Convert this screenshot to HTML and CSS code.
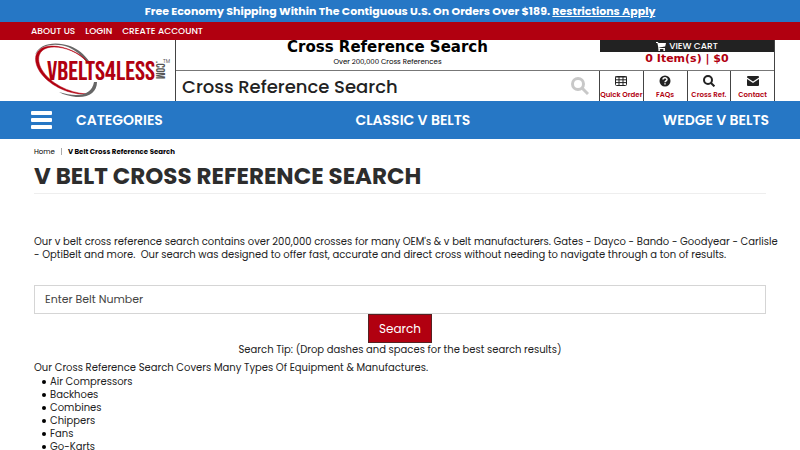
FILE: index.html
```
<!DOCTYPE html>
<html lang="en">
<head>
    <meta charset="UTF-8">
    <meta name="viewport" content="width=device-width, initial-scale=1.0">
    <title>V Belt Cross Reference Search</title>
    <link rel="stylesheet" href="styles.css">
</head>
<body>

    <div class="promo-bar">
        Free Economy Shipping Within The Contiguous U.S. On Orders Over $189. <a href="#">Restrictions Apply</a>
    </div>

    <nav class="account-bar" aria-label="Account">
        <a href="#">ABOUT US</a>
        <a href="#">LOGIN</a>
        <a href="#">CREATE ACCOUNT</a>
    </nav>

    <header class="site-header">
        <a class="logo" href="#" aria-label="VBelts4Less.com">
            <svg width="141" height="58" viewBox="0 0 141 58">
                <path d="M1 13C5 1 22-1 36 4C44 7 50 12 55 19L52 19C46 12 41 8 34 5C22 1 7 2 1 13Z" fill="#666"/>
                <path d="M52 19C45 11 32 5 20 5C5 5 1 16 8 28C16 41 34 51 53 52C34 53 15 43 6 30C-3 16 2 4 18 4C31 4 46 11 53 19Z" fill="#b10010" stroke="#b10010" stroke-width="0.5"/>
                <path d="M60 40L63 40C63 50 55 56 42 55C36 54 30 53 25 50C44 56 58 53 60 40Z" fill="#666"/>
                <text class="logo-name" x="13" y="38">VBELTS4LESS</text>
                <text class="logo-com" transform="translate(122 19) rotate(90)">.COM</text>
                <text class="logo-tm" x="129" y="21">TM</text>
            </svg>
        </a>

        <div class="header-main">
            <div class="header-title">
                <strong>Cross Reference Search</strong>
                <small>Over 200,000 Cross References</small>
            </div>
            <form class="header-search">
                <input type="text" placeholder="Cross Reference Search" aria-label="Cross Reference Search">
                <button type="submit" aria-label="Search">
                    <svg width="18" height="19" viewBox="0 0 18 19" fill="none" stroke="#c8c8c8" stroke-width="3">
                        <circle cx="7" cy="7" r="5.5"/>
                        <path d="M11 11L17 17"/>
                    </svg>
                </button>
            </form>
        </div>

        <div class="header-side">
            <div class="cart">
                <a class="cart-link" href="#">
                    <svg width="10" height="9" viewBox="0 0 10 9" fill="#fff">
                        <path d="M0 0H2L2.4 1H10L9.2 4.6L3.3 5.4V6H9V7H2.3V5.5L1.4 1H0Z"/>
                        <circle cx="3.2" cy="8" r="1"/>
                        <circle cx="8.2" cy="8" r="1"/>
                    </svg>
                    VIEW CART
                </a>
                <span class="cart-total">0 Item(s) | $0</span>
            </div>
            <nav class="quick-links" aria-label="Quick links">
                <a href="#">
                    <svg width="12" height="12" viewBox="0 0 12 12" fill="none" stroke="#222">
                        <rect x="0.5" y="1.5" width="11" height="9" rx="1"/>
                        <path d="M0 2H12M0 4.8H12M0 7.6H12M4 1V11M8 1V11"/>
                    </svg>
                    Quick Order
                </a>
                <a href="#">
                    <svg width="12" height="12" viewBox="0 0 12 12">
                        <circle cx="6" cy="6" r="5.5" fill="#222"/>
                        <path d="M4 4.6C4 2.3 8 2.3 8 4.5C8 5.8 6 5.8 6 7.3M6 8.2V9.6" fill="none" stroke="#fff" stroke-width="1.5"/>
                    </svg>
                    FAQs
                </a>
                <a href="#">
                    <svg width="12" height="12" viewBox="0 0 12 12" fill="none" stroke="#222" stroke-width="2">
                        <circle cx="5" cy="5" r="4"/>
                        <path d="M8 8L11.4 11.4"/>
                    </svg>
                    Cross Ref.
                </a>
                <a href="#">
                    <svg width="12" height="12" viewBox="0 0 12 12" fill="#222">
                        <path d="M0 2Q0 1 1 1H11Q12 1 12 2V2.6L6 6.6L0 2.6Z"/>
                        <path d="M0 4L6 8L12 4V10Q12 11 11 11H1Q0 11 0 10Z"/>
                    </svg>
                    Contact
                </a>
            </nav>
        </div>
    </header>

    <nav class="main-nav" aria-label="Main">
        <a class="categories" href="#">
            <svg width="21" height="18" viewBox="0 0 21 18" fill="#fff">
                <rect width="21" height="4" rx="1"/>
                <rect y="7" width="21" height="4" rx="1"/>
                <rect y="14" width="21" height="4" rx="1"/>
            </svg>
            CATEGORIES
        </a>
        <a href="#">CLASSIC V BELTS</a>
        <a href="#">WEDGE V BELTS</a>
    </nav>

    <main class="content">
        <div class="breadcrumbs">
            <a href="#">Home</a>
            <span class="separator"></span>
            <strong>V Belt Cross Reference Search</strong>
        </div>
        <h1>V BELT CROSS REFERENCE SEARCH</h1>

        <p class="intro">Our v belt cross reference search contains over 200,000 crosses for many OEM's &amp; v belt manufacturers. Gates - Dayco - Bando - Goodyear - Carlisle<br>- OptiBelt and more.&nbsp; Our search was designed to offer fast, accurate and direct cross without needing to navigate through a ton of results.</p>

        <form class="belt-search">
            <input type="text" placeholder="Enter Belt Number" aria-label="Enter Belt Number">
            <button type="submit">Search</button>
            <p>Search Tip: (Drop dashes and spaces for the best search results)</p>
        </form>

        <h2>Our Cross Reference Search Covers Many Types Of Equipment &amp; Manufactures.</h2>
        <ul class="equipment">
            <li>Air Compressors</li>
            <li>Backhoes</li>
            <li>Combines</li>
            <li>Chippers</li>
            <li>Fans</li>
            <li>Go-Karts</li>
        </ul>
    </main>

</body>
</html>
```
FILE: styles.css
```
/* General */
* {
    box-sizing: border-box;
}

body {
    margin: 0;
    font-family: Poppins, Inter, sans-serif;
    font-size: 10px;
    line-height: 13px;
    color: #222;
    background: #fff;
}

a {
    color: inherit;
    text-decoration: none;
}

svg {
    display: block;
    flex: none;
}

input,
button {
    font: inherit;
    border-radius: 0;
}

/* Top bars */
.promo-bar {
    padding: 1px 0;
    background: #2677c5;
    color: #fff;
    font-size: 11px;
    font-weight: 700;
    line-height: 20px;
    text-align: center;
}

.promo-bar a {
    text-decoration: underline;
}

.account-bar {
    display: flex;
    gap: 10px;
    padding: 0 31px;
    background: #b10010;
    color: #fff;
    font-size: 9px;
    font-weight: 500;
    line-height: 18px;
}

/* Header */
.site-header {
    display: grid;
    grid-template-columns: 150px 1fr 176px;
    height: 61px;
    padding: 0 25px;
}

.logo {
    padding: 2px 0 0 9px;
}

.logo-name {
    font-family: "Bebas Neue", Roboto, sans-serif;
    font-size: 27px;
    fill: #b10010;
}

.logo-com {
    font-family: "Bebas Neue", Roboto, sans-serif;
    font-size: 12px;
    fill: #555;
}

.logo-tm {
    font-size: 5px;
    fill: #555;
}

.header-main {
    border-left: 1px solid #444;
}

.header-title {
    display: flex;
    flex-direction: column;
    height: 31px;
    border-bottom: 1px solid #777;
    color: #000;
    text-align: center;
}

.header-title strong {
    font-family: "DejaVu Sans", sans-serif;
    font-size: 15px;
    line-height: 15px;
}

.header-title small {
    font-size: 7px;
    line-height: 13px;
}

.header-search {
    display: flex;
    align-items: center;
    height: 30px;
    padding: 0 10px 0 6px;
}

.header-search input {
    flex: 1;
    min-width: 0;
    padding: 0;
    border: 0;
    font-size: 18px;
    font-weight: 500;
}

.header-search input::placeholder {
    color: #222;
    opacity: 1;
}

.header-search button {
    padding: 0;
    border: 0;
    background: none;
}

/* Cart and quick links */
.header-side {
    border-right: 1px solid #444;
}

.cart {
    height: 31px;
    padding-left: 1px;
    border-bottom: 1px solid #777;
    text-align: center;
}

.cart-link {
    display: flex;
    justify-content: center;
    align-items: center;
    gap: 3px;
    background: #222;
    color: #fff;
    font-size: 9px;
    font-weight: 500;
    line-height: 12px;
}

.cart-total {
    color: #b10010;
    font-family: "DejaVu Sans", sans-serif;
    font-size: 11px;
    font-weight: 700;
    line-height: 14px;
}

.quick-links {
    display: grid;
    grid-template-columns: repeat(4, 1fr);
    height: 30px;
}

.quick-links a {
    display: flex;
    flex-direction: column;
    align-items: center;
    gap: 3px;
    padding-top: 4px;
    border-left: 1px solid #444;
    color: #b10010;
    font-size: 7px;
    font-weight: 600;
    line-height: 9px;
    white-space: nowrap;
}

/* Main navigation */
.main-nav {
    display: flex;
    justify-content: space-between;
    align-items: center;
    height: 38px;
    padding: 0 31px;
    background: #2677c5;
    color: #fff;
    font-size: 14px;
    font-weight: 600;
}

.categories {
    display: flex;
    align-items: center;
    gap: 24px;
}

/* Content */
.content {
    padding: 6px 34px 0;
}

.breadcrumbs {
    display: flex;
    align-items: center;
    gap: 6px;
    color: #000;
    font-size: 7px;
}

.separator {
    height: 7px;
    border-left: 1px solid #aaa;
}

h1 {
    margin: 0 0 41px;
    padding: 6px 0 4px;
    border-bottom: 1px solid #eee;
    color: #2d2d2d;
    font-size: 23px;
    font-weight: 700;
    line-height: 25px;
}

.intro {
    margin: 0 -14px 24px 0;
}

.belt-search {
    display: flex;
    flex-direction: column;
    align-items: center;
}

.belt-search input {
    width: 100%;
    height: 29px;
    padding: 0 10px;
    border: 1px solid #d5d5d5;
    font-size: 11px;
}

.belt-search input::placeholder {
    color: #444;
    opacity: 1;
}

.belt-search button {
    height: 29px;
    padding: 0 10px;
    border: 1px solid #522;
    background: #b10010;
    color: #fff;
    font-size: 12px;
}

.belt-search p {
    margin: 0;
}

h2 {
    margin: 5px 0 1px;
    font-size: 10px;
    font-weight: 400;
    line-height: 13px;
}

.equipment {
    margin: 0;
    padding-left: 8px;
    list-style: none;
}

.equipment li {
    display: flex;
    align-items: center;
    gap: 4px;
}

.equipment li::before {
    content: "";
    width: 4px;
    height: 4px;
    border-radius: 50%;
    background: #000;
}
```
